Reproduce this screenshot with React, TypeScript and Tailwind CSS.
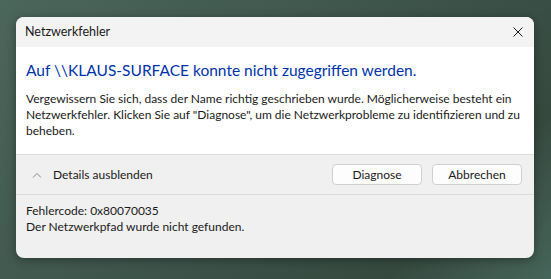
const font = { fontFamily: 'Lato, "Noto Sans", "Liberation Sans", sans-serif' };

function ChevronUp() {
	return (
		<svg width="10" height="6" viewBox="0 0 10 6" fill="none">
			<path d="M1 5.5 L5 1.5 L9 5.5" stroke="#8a8a8a" strokeWidth="1" />
		</svg>
	);
}

function CloseIcon() {
	return (
		<svg width="10" height="10" viewBox="0 0 10 10" fill="none">
			<path d="M0.5 0.5 L9.5 9.5 M9.5 0.5 L0.5 9.5" stroke="#1a1a1a" strokeWidth="1" />
		</svg>
	);
}

export default function App() {
	return (
		<div
			className="w-[551px] h-[279px] bg-[linear-gradient(135deg,#4b665b_0%,#3d544b_50%,#36493f_80%,#46655a_100%)] pt-[17px] pl-[16px] text-[12px] text-[#1a1a1a]"
			style={font}
		>
			<div className="w-[518px] h-[241px] rounded-[8px] overflow-hidden bg-[#f0f0f0] flex flex-col shadow-[0_2px_10px_rgba(0,0,0,0.35)]">
				<div className="h-[30px] bg-[#f3f3f3] flex items-center justify-between pl-[9px] pr-[11px]">
					<span className="text-[12.5px]">Netzwerkfehler</span>
					<CloseIcon />
				</div>
				<div className="h-[107px] bg-white px-[10px] pt-[12px]">
					<h1 className="text-[15.5px] leading-[22px] text-[#0033aa]">
						Auf \\KLAUS-SURFACE konnte nicht zugegriffen werden.
					</h1>
					<p className="mt-[10px] leading-[16px]">
						Vergewissern Sie sich, dass der Name richtig geschrieben wurde. Möglicherweise besteht ein Netzwerkfehler. Klicken Sie auf "Diagnose", um die Netzwerkprobleme zu identifizieren und zu beheben.
					</p>
				</div>
				<div className="h-[41px] border-t border-b border-[#dcdcdc] flex items-center justify-between pl-[16px] pr-[12px]">
					<div className="flex items-center gap-[11px]">
						<ChevronUp />
						<span>Details ausblenden</span>
					</div>
					<div className="flex gap-[10px]">
						<button className="w-[90px] h-[21px] rounded-[4px] border border-[#d0d0d0] bg-[#fdfdfd] leading-none">
							Diagnose
						</button>
						<button className="w-[90px] h-[21px] rounded-[4px] border border-[#d0d0d0] bg-[#fdfdfd] leading-none">
							Abbrechen
						</button>
					</div>
				</div>
				<div className="px-[10px] pt-[8px] leading-[16px]">
					<p>Fehlercode: 0x80070035</p>
					<p>Der Netzwerkpfad wurde nicht gefunden.</p>
				</div>
			</div>
		</div>
	);
}
